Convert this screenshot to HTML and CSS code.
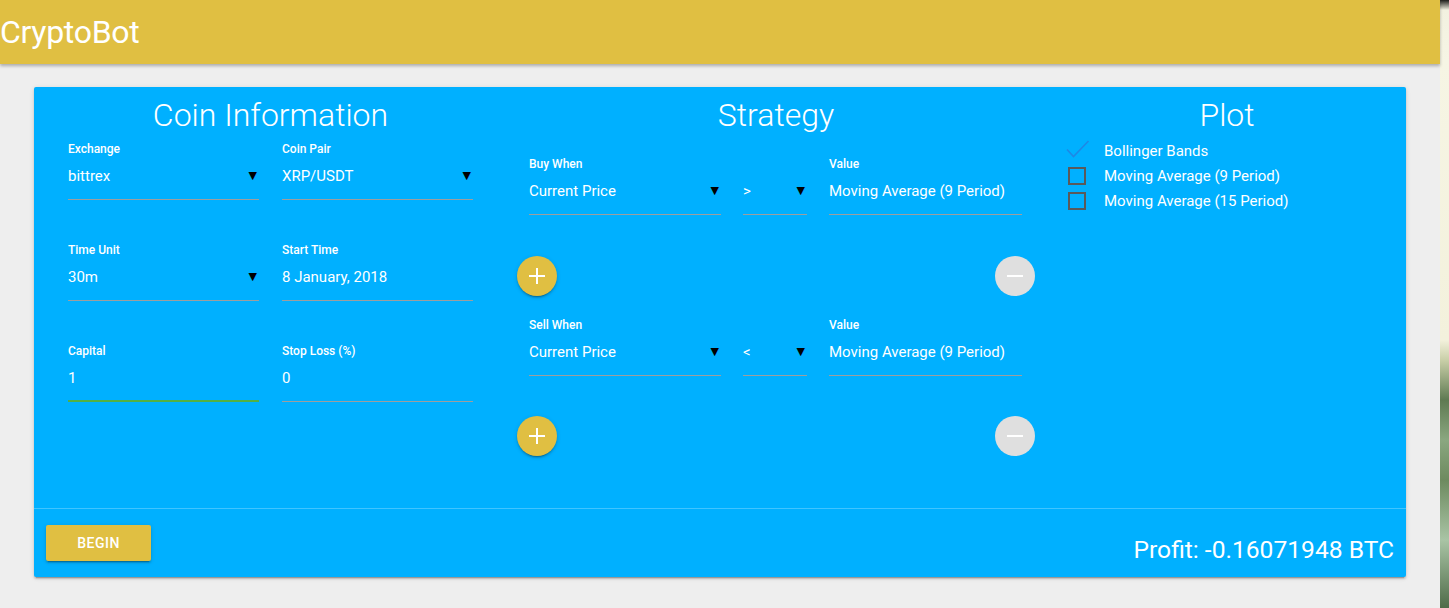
FILE: index.html
```html
<!DOCTYPE html>
<html>
<head>
<meta charset="utf-8">
<title>CryptoBot</title>
<link rel="stylesheet" href="styles.css">
</head>
<body>
<div class="screen">
  <div class="app">
    <header class="topbar"><span class="brand">CryptoBot</span></header>
    <main class="content">
      <section class="card">
        <div class="card-body">
          <div class="col col-coin">
            <h2 class="title">Coin Information</h2>
            <div class="coin-grid">
              <div class="field">
                <div class="label">Exchange</div>
                <div class="value"><span>bittrex</span><span class="caret">▼</span></div>
              </div>
              <div class="field">
                <div class="label">Coin Pair</div>
                <div class="value"><span>XRP/USDT</span><span class="caret">▼</span></div>
              </div>
              <div class="field">
                <div class="label">Time Unit</div>
                <div class="value"><span>30m</span><span class="caret">▼</span></div>
              </div>
              <div class="field">
                <div class="label">Start Time</div>
                <div class="value"><span>8 January, 2018</span></div>
              </div>
              <div class="field field-focus">
                <div class="label">Capital</div>
                <div class="value"><span>1</span></div>
              </div>
              <div class="field">
                <div class="label">Stop Loss (%)</div>
                <div class="value"><span>0</span></div>
              </div>
            </div>
          </div>

          <div class="col col-strategy">
            <h2 class="title">Strategy</h2>
            <div class="rule rule-first">
              <div class="field">
                <div class="label">Buy When</div>
                <div class="value"><span>Current Price</span><span class="caret">▼</span></div>
              </div>
              <div class="field">
                <div class="label">&nbsp;</div>
                <div class="value"><span>&gt;</span><span class="caret">▼</span></div>
              </div>
              <div class="field">
                <div class="label">Value</div>
                <div class="value"><span>Moving Average (9 Period)</span></div>
              </div>
            </div>
            <div class="fab-row">
              <button class="fab fab-add" aria-label="add">
                <svg width="18" height="18" viewBox="0 0 18 18"><path d="M9 1v16M1 9h16" stroke="#fff" stroke-width="2" fill="none"/></svg>
              </button>
              <button class="fab fab-remove" aria-label="remove">
                <svg width="18" height="18" viewBox="0 0 18 18"><path d="M1 9h16" stroke="#fff" stroke-width="2" fill="none"/></svg>
              </button>
            </div>
            <div class="rule">
              <div class="field">
                <div class="label">Sell When</div>
                <div class="value"><span>Current Price</span><span class="caret">▼</span></div>
              </div>
              <div class="field">
                <div class="label">&nbsp;</div>
                <div class="value"><span>&lt;</span><span class="caret">▼</span></div>
              </div>
              <div class="field">
                <div class="label">Value</div>
                <div class="value"><span>Moving Average (9 Period)</span></div>
              </div>
            </div>
            <div class="fab-row fab-row-last">
              <button class="fab fab-add" aria-label="add">
                <svg width="18" height="18" viewBox="0 0 18 18"><path d="M9 1v16M1 9h16" stroke="#fff" stroke-width="2" fill="none"/></svg>
              </button>
              <button class="fab fab-remove" aria-label="remove">
                <svg width="18" height="18" viewBox="0 0 18 18"><path d="M1 9h16" stroke="#fff" stroke-width="2" fill="none"/></svg>
              </button>
            </div>
          </div>

          <div class="col col-plot">
            <h2 class="title">Plot</h2>
            <ul class="checks">
              <li class="check">
                <span class="box box-checked"><svg width="24" height="18" viewBox="0 0 24 18"><path d="M1 9.5l6.5 7L22.5 1" stroke="#1E88E5" stroke-width="1.6" fill="none"/></svg></span>
                <span>Bollinger Bands</span>
              </li>
              <li class="check"><span class="box box-empty"></span><span>Moving Average (9 Period)</span></li>
              <li class="check"><span class="box box-empty"></span><span>Moving Average (15 Period)</span></li>
            </ul>
          </div>
        </div>
        <div class="card-action">
          <button class="btn">BEGIN</button>
          <div class="profit">Profit: -0.16071948 BTC</div>
        </div>
      </section>
    </main>
  </div>
  <div class="desktop"></div>
</div>
</body>
</html>
```

FILE: styles.css
```css
* { box-sizing: border-box; }
html, body { margin: 0; padding: 0; }
body {
  font-family: Roboto, "Liberation Sans", Arial, sans-serif;
  background: #eeeeee;
  color: #fff;
  overflow: hidden;
}
.screen {
  display: flex;
  width: 1449px;
  height: 608px;
}
.app {
  width: 1440px;
  flex: none;
  background: #eeeeee;
}
.desktop {
  flex: 1;
  background: linear-gradient(180deg, #1d1d1a 0px, #f2f1e0 10px, #f6f5e4 60px, #f3f1dc 340px, #c9cfa8 360px, #5f7a52 400px, #8aa780 440px, #6d8a5f 480px, #a9c4a5 540px, #4f6b48 608px);
}
.topbar {
  height: 64px;
  background: #e0bf42;
  box-shadow: 0 2px 3px rgba(0,0,0,0.28);
  position: relative;
  z-index: 1;
}
.brand {
  display: block;
  font-size: 32px;
  line-height: 64px;
  color: #fff;
  padding-left: 0;
  letter-spacing: -0.3px;
}
.content {
  padding: 23px 34px 0 34px;
}
.card {
  background: #00b0ff;
  height: 490px;
  border-radius: 2px;
  box-shadow: 0 2px 2px rgba(0,0,0,0.14), 0 1px 5px rgba(0,0,0,0.12), 0 3px 1px -2px rgba(0,0,0,0.2);
  display: flex;
  flex-direction: column;
}
.card-body {
  height: 421px;
  flex: none;
  display: grid;
  grid-template-columns: 472px 540px 360px;
  padding-top: 10px;
}
.title {
  margin: 0;
  font-size: 32px;
  font-weight: 300;
  line-height: 36px;
  text-align: center;
  color: #fff;
}
.col-coin { padding: 0 33px 0 34px; }
.coin-grid {
  margin-top: 9px;
  display: grid;
  grid-template-columns: 191px 191px;
  column-gap: 23px;
  row-gap: 43px;
}
.field {
  border-bottom: 1px solid #9e9e9e;
  padding-bottom: 12px;
}
.field-focus {
  border-bottom: 2px solid #52b044;
  padding-bottom: 12px;
}
.label {
  font-size: 12px;
  line-height: 14px;
  font-weight: 500;
  color: #fff;
}
.value {
  margin-top: 10px;
  font-size: 15px;
  line-height: 20px;
  color: #fff;
  display: flex;
  justify-content: space-between;
  align-items: center;
}
.coin-grid .value { margin-top: 10px; }
.coin-grid .field { padding-bottom: 13px; }
.coin-grid .field-focus { padding-bottom: 12px; }
.caret {
  color: #000;
  font-size: 11px;
  line-height: 20px;
  font-family: "DejaVu Sans", sans-serif;
  margin-right: 2px;
}
.col-strategy { padding: 0 23px; }
.rule {
  display: grid;
  grid-template-columns: 192px 64px 193px;
  column-gap: 22px;
  margin-top: 22px;
}
.rule .value { margin-top: 10px; }
.rule .field { padding-bottom: 13px; }
.rule-first { margin-top: 24px; }
.fab-row {
  display: flex;
  justify-content: space-between;
  margin: 41px -12px 0 -12px;
}
.fab-row-last { margin-top: 40px; }
.fab {
  width: 40px;
  height: 40px;
  border-radius: 50%;
  border: none;
  padding: 0;
  display: flex;
  align-items: center;
  justify-content: center;
}
.fab-add {
  background: #e0bf42;
  box-shadow: 0 2px 2px rgba(0,0,0,0.14), 0 1px 5px rgba(0,0,0,0.12), 0 3px 1px -2px rgba(0,0,0,0.2);
}
.fab-remove {
  background: #dfdfdf;
}
.col-plot { padding: 0 20px 0 22px; }
.checks {
  list-style: none;
  margin: 5px 0 0 0;
  padding: 0;
}
.check {
  display: flex;
  align-items: center;
  height: 25px;
  font-size: 15px;
  font-weight: 400;
  color: #fff;
}
.box {
  width: 18px;
  height: 18px;
  margin-right: 18px;
  flex: none;
}
.box-checked {
  position: relative;
}
.box-checked svg {
  position: absolute;
  left: -2px;
  top: -2px;
}
.box-empty {
  border: 2px solid #5a5a5a;
  margin-left: 0;
}
.card-action {
  border-top: 1px solid rgba(255,255,255,0.25);
  flex: 1;
  display: flex;
  justify-content: space-between;
  align-items: flex-start;
  padding: 16px 12px 0 12px;
}
.btn {
  width: 105px;
  height: 36px;
  border: none;
  border-radius: 2px;
  background: #e0bf42;
  color: #fff;
  font-family: Roboto, "Liberation Sans", Arial, sans-serif;
  font-size: 14px;
  font-weight: 500;
  letter-spacing: 0.5px;
  box-shadow: 0 2px 2px rgba(0,0,0,0.14), 0 1px 5px rgba(0,0,0,0.12), 0 3px 1px -2px rgba(0,0,0,0.2);
}
.profit {
  margin-top: 11px;
  font-size: 24.6px;
  line-height: 28px;
  color: #fff;
}
```
